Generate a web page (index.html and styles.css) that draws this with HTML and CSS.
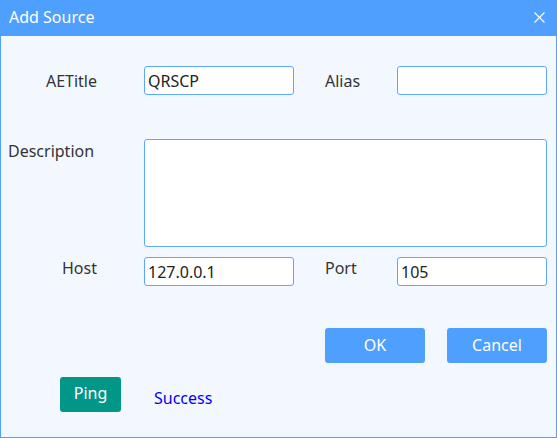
FILE: index.html
```html
<!DOCTYPE html>
<html>
<head>
<meta charset="utf-8">
<link rel="stylesheet" href="styles.css">
</head>
<body>
<div class="dialog">
  <div class="titlebar">
    <span class="title">Add Source</span>
    <svg class="close" width="11" height="11" viewBox="0 0 11 11"><path d="M0.5 0.5 L10.5 10.5 M10.5 0.5 L0.5 10.5" stroke="#fff" stroke-width="1.1" fill="none"/></svg>
  </div>
  <div class="content">
    <div class="row row-first">
      <label class="lbl-l">AETitle</label>
      <input class="field" type="text" value="QRSCP">
      <label class="lbl-r">Alias</label>
      <input class="field" type="text" value="">
    </div>
    <div class="row row-desc">
      <label class="lbl-l lbl-desc">Description</label>
      <textarea class="area"></textarea>
    </div>
    <div class="row row-host">
      <label class="lbl-l lbl-top">Host</label>
      <input class="field" type="text" value="127.0.0.1">
      <label class="lbl-r lbl-top">Port</label>
      <input class="field" type="text" value="105">
    </div>
    <div class="actions">
      <button class="btn btn-primary">OK</button>
      <button class="btn btn-primary">Cancel</button>
    </div>
    <div class="ping-row">
      <button class="btn btn-ping">Ping</button>
      <span class="status">Success</span>
    </div>
  </div>
</div>
</body>
</html>
```
FILE: styles.css
```css
* { box-sizing: border-box; }
html, body { margin: 0; padding: 0; }
body {
  font-family: "Noto Sans", "Open Sans", sans-serif;
  color: #333;
  background: #f3f8ff;
}
.dialog {
  width: 557px;
  height: 438px;
  background: #f3f8ff;
  border: 1px solid #4f9fff;
  border-top: none;
  display: flex;
  flex-direction: column;
}
.titlebar {
  height: 36px;
  background: #4f9fff;
  display: flex;
  align-items: center;
  justify-content: space-between;
  padding: 0 12px 0 9px;
  margin: 0 -1px;
}
.title {
  color: #fff;
  font-size: 16px;
  line-height: 20px;
  margin-top: -3px;
}
.close { display: block; margin-top: -1px; }
.content {
  padding: 30px 9px 0 0;
  display: flex;
  flex-direction: column;
}
.row {
  display: flex;
  align-items: center;
}
.lbl-l {
  width: 96px;
  text-align: right;
  font-size: 16px;
  margin-right: 47px;
  line-height: 20px;
}
.lbl-r {
  width: 72px;
  margin-left: 31px;
  font-size: 16px;
  line-height: 20px;
}
.lbl-top { align-self: flex-start; margin-top: 1px; }
.field {
  width: 150px;
  height: 29px;
  border: 1px solid #5ea6ff;
  border-radius: 3px;
  background: #fff;
  font-family: inherit;
  font-size: 16px;
  color: #222;
  padding: 0 3px;
  outline: none;
}
.row-desc {
  margin-top: 44px;
  align-items: flex-start;
}
.lbl-desc {
  text-align: left;
  padding-left: 7px;
  margin-top: 2px;
}
.area {
  width: 403px;
  height: 108px;
  border: 1px solid #5ea6ff;
  border-radius: 3px;
  background: #fff;
  resize: none;
  outline: none;
}
.row-host { margin-top: 10px; }
.actions {
  margin-top: 42px;
  display: flex;
  justify-content: flex-end;
  gap: 22px;
}
.btn {
  border: none;
  border-radius: 3px;
  color: #fff;
  font-family: inherit;
  font-size: 16px;
  height: 35px;
  padding: 0 0 2px;
}
.btn-primary {
  width: 100px;
  background: #4f9fff;
}
.ping-row {
  margin-top: 14px;
  display: flex;
  align-items: center;
  padding-left: 59px;
}
.btn-ping {
  width: 61px;
  background: #009688;
  padding-bottom: 4px;
}
.status {
  margin-left: 33px;
  margin-top: 6px;
  color: #0000ff;
  font-size: 16px;
}
```
